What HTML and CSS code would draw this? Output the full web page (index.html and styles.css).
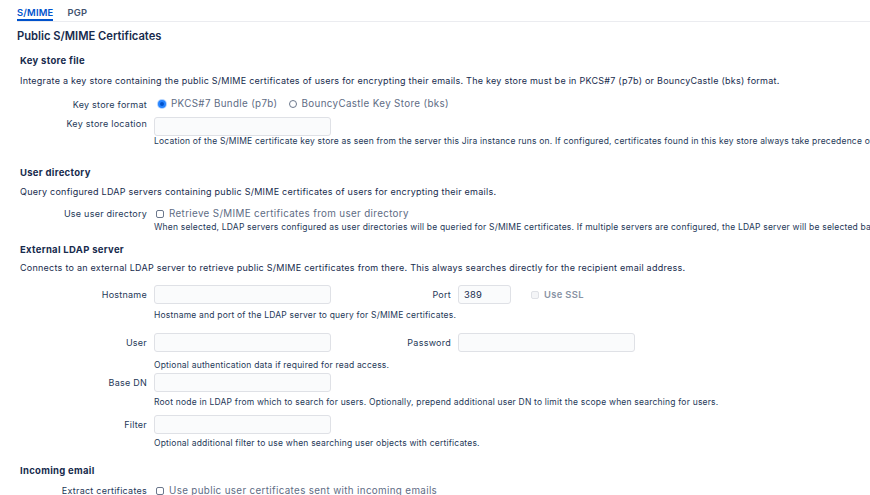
FILE: index.html
```html
<!DOCTYPE html>
<html>
<head>
<meta charset="utf-8">
<link rel="stylesheet" href="styles.css">
</head>
<body>
<nav class="tabs">
  <span class="tab active">S/MIME</span>
  <span class="tab">PGP</span>
</nav>
<main class="page">
  <h1 class="title">Public S/MIME Certificates</h1>

  <section class="section first">
    <h2 class="sec-title">Key store file</h2>
    <p class="desc">Integrate a key store containing the public S/MIME certificates of users for encrypting their emails. The key store must be in PKCS#7 (p7b) or BouncyCastle (bks) format.</p>
    <div class="form">
      <div class="row row-format">
        <label class="lbl">Key store format</label>
        <div class="ctl inline radios">
          <span class="opt"><span class="radio on"></span>PKCS#7 Bundle (p7b)</span>
          <span class="opt"><span class="radio"></span>BouncyCastle Key Store (bks)</span>
        </div>
      </div>
      <div class="row row-location">
        <label class="lbl lbl-top">Key store location</label>
        <div class="ctl">
          <input class="field" type="text">
          <div class="help help-loc">Location of the S/MIME certificate key store as seen from the server this Jira instance runs on. If configured, certificates found in this key store always take precedence over those from other sources.</div>
        </div>
      </div>
    </div>
  </section>

  <section class="section s-user">
    <h2 class="sec-title">User directory</h2>
    <p class="desc">Query configured LDAP servers containing public S/MIME certificates of users for encrypting their emails.</p>
    <div class="form">
      <div class="row row-userdir">
        <label class="lbl">Use user directory</label>
        <div class="ctl">
          <span class="opt"><span class="check"></span>Retrieve S/MIME certificates from user directory</span>
          <div class="help help-tight">When selected, LDAP servers configured as user directories will be queried for S/MIME certificates. If multiple servers are configured, the LDAP server will be selected based on the recipient's domain.</div>
        </div>
      </div>
    </div>
  </section>

  <section class="section s-ldap">
    <h2 class="sec-title">External LDAP server</h2>
    <p class="desc">Connects to an external LDAP server to retrieve public S/MIME certificates from there. This always searches directly for the recipient email address.</p>
    <div class="form">
      <div class="row row-host">
        <label class="lbl lbl-mid">Hostname</label>
        <div class="ctl">
          <div class="inline">
            <input class="field" type="text">
            <label class="lbl lbl-mid sub-lbl">Port</label>
            <input class="field port" type="text" value="389">
            <span class="opt disabled"><span class="check off"></span>Use SSL</span>
          </div>
          <div class="help help-host">Hostname and port of the LDAP server to query for S/MIME certificates.</div>
        </div>
      </div>
      <div class="row row-user">
        <label class="lbl lbl-mid">User</label>
        <div class="ctl">
          <div class="inline">
            <input class="field" type="text">
            <label class="lbl lbl-mid sub-lbl">Password</label>
            <input class="field" type="password">
          </div>
          <div class="help help-user">Optional authentication data if required for read access.</div>
        </div>
      </div>
      <div class="row row-base">
        <label class="lbl lbl-mid">Base DN</label>
        <div class="ctl">
          <input class="field" type="text">
          <div class="help help-base">Root node in LDAP from which to search for users. Optionally, prepend additional user DN to limit the scope when searching for users.</div>
        </div>
      </div>
      <div class="row row-filter">
        <label class="lbl lbl-mid">Filter</label>
        <div class="ctl">
          <input class="field" type="text">
          <div class="help help-filter">Optional additional filter to use when searching user objects with certificates.</div>
        </div>
      </div>
    </div>
  </section>

  <section class="section s-incoming">
    <h2 class="sec-title">Incoming email</h2>
    <div class="form">
      <div class="row row-extract">
        <label class="lbl">Extract certificates</label>
        <div class="ctl">
          <span class="opt"><span class="check"></span>Use public user certificates sent with incoming emails</span>
        </div>
      </div>
    </div>
  </section>
</main>
</body>
</html>
```

FILE: styles.css
```css
* { box-sizing: border-box; }
html, body {
  margin: 0;
  padding: 0;
  background: #ffffff;
  overflow: hidden;
}
body {
  width: 870px;
  height: 495px;
  font-family: "Inter", "Liberation Sans", sans-serif;
  font-size: 9px;
  letter-spacing: 0.25px;
  color: #172b4d;
}

.tabs {
  display: flex;
  gap: 14px;
  margin-left: 17px;
  height: 22px;
  border-bottom: 1px solid #ebecf0;
}
.tab {
  display: flex;
  align-items: center;
  height: 21px;
  padding-top: 5px;
  font-size: 9.4px;
  font-weight: 600;
  letter-spacing: 0.2px;
  color: #42526e;
  border-bottom: 2px solid transparent;
}
.tab.active {
  color: #0052cc;
  border-bottom-color: #0052cc;
}

.page {
  padding-left: 17px;
  overflow: hidden;
}
.title {
  margin: 7px 0 0;
  font-size: 11.2px;
  line-height: 14px;
  font-weight: 600;
  letter-spacing: 0;
  color: #172b4d;
}
.section { padding-left: 3px; }
.section.first { margin-top: 12px; }
.s-user { margin-top: 20px; }
.s-ldap { margin-top: 11px; }
.s-incoming { margin-top: 16px; }

.sec-title {
  margin: 0;
  font-size: 9.5px;
  line-height: 12px;
  font-weight: 700;
  letter-spacing: 0.3px;
  color: #172b4d;
}
.desc {
  margin: 7px 0 0;
  line-height: 12px;
  color: #172b4d;
  white-space: nowrap;
}
.first .desc { margin-top: 8px; }
.s-ldap .desc { margin-top: 6px; }

.form {
  display: flex;
  flex-direction: column;
  margin-top: 11px;
}
.s-user .form { margin-top: 10px; }
.s-ldap .form { margin-top: 11px; }
.s-incoming .form { margin-top: 8px; }

.row {
  display: grid;
  grid-template-columns: 127px 1fr;
  column-gap: 7px;
  align-items: start;
}
.row-format .lbl { padding-top: 1px; }
.row-location { margin-top: 6px; }
.row-user { margin-top: 12px; }
.row-base { margin-top: 2px; }
.row-filter { margin-top: 7px; }

.lbl {
  text-align: right;
  line-height: 12px;
  color: #253858;
  white-space: nowrap;
}
.lbl-top { padding-top: 1px; }
.lbl-mid { line-height: 19px; }

.ctl { min-width: 0; }
.inline {
  display: flex;
  align-items: center;
  gap: 7px;
}
.radios { gap: 7px; }
.opt {
  display: inline-flex;
  align-items: center;
  gap: 5px;
  line-height: 12px;
  font-size: 9.8px;
  letter-spacing: 0.35px;
  color: #5e6c84;
  white-space: nowrap;
}
.opt.disabled {
  color: #8993a4;
  font-weight: 600;
  font-size: 9.4px;
  margin-left: 11px;
}
.radio {
  width: 8px;
  height: 8px;
  border-radius: 50%;
  border: 1px solid #6b778c;
  background: #fff;
  margin-left: 4px;
}
.radio.on {
  border: 2px solid #2684ff;
  background: #0052cc;
  box-shadow: 0 0 0 1px #b3d4ff;
}
.check {
  width: 8px;
  height: 8px;
  border-radius: 2px;
  border: 1px solid #6b778c;
  background: #fff;
  margin-left: 2px;
}
.check.off {
  border-color: #dfe1e6;
  background: #f4f5f7;
}

.field {
  display: block;
  flex: none;
  width: 177px;
  height: 19px;
  margin: 0;
  padding: 0 5px;
  border: 1px solid #dfe1e6;
  border-radius: 3px;
  background: #fafbfc;
  font-family: inherit;
  font-size: 9.4px;
  letter-spacing: 0.2px;
  color: #172b4d;
  outline: none;
}
.field.port { width: 53px; }
.sub-lbl { width: 113px; flex: none; }

.help {
  margin-top: 3px;
  line-height: 11px;
  font-size: 8.5px;
  letter-spacing: 0.2px;
  color: #253858;
  white-space: nowrap;
}
.help-loc { margin-top: 0; }
.help-tight { margin-top: 2px; }
.help-host { margin-top: 6px; }
.help-user { margin-top: 8px; }
.help-base { margin-top: 5px; }
.help-filter { margin-top: 4px; }
```
